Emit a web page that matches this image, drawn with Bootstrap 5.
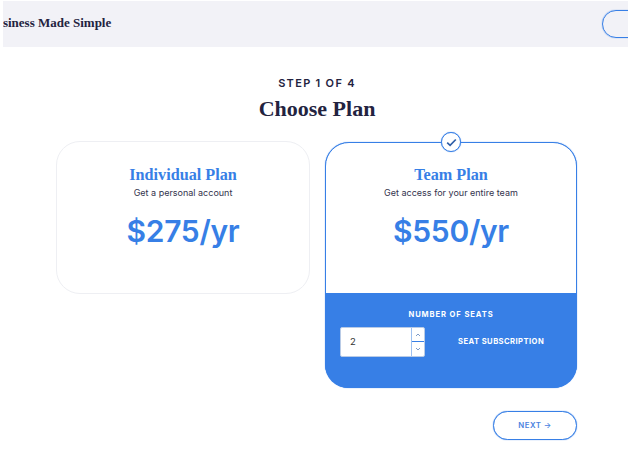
<!DOCTYPE html>
<html lang="en">
<head>
<meta charset="utf-8">
<title>Choose Plan</title>
<link rel="stylesheet" href="https://cdn.jsdelivr.net/npm/bootstrap@5.3.0/dist/css/bootstrap.min.css">
<style>
html,body{height:467px;overflow:hidden;}
body{font-family:"Inter","Liberation Sans",sans-serif;color:#23233f;background:#fff;}
.serif-face{font-family:"Liberation Serif",serif;font-weight:700;}
.top-strip{height:46px;margin:1px 0 0 3px;padding-bottom:1px;background:#f2f2f7;overflow:hidden;}
.brand-name{font-size:13px;line-height:1;color:#23233f;margin-left:-16px;padding-bottom:2px;white-space:nowrap;}
.ghost-pill{width:70px;height:28px;flex:none;margin-right:-44px;border:1px solid #377fe6;box-shadow:0 0 1px #377fe6;border-radius:14px;background:transparent;}
.step-label{font-size:11px;font-weight:600;letter-spacing:1.3px;line-height:14px;margin-top:29px;}
.heading-block{padding-left:6px;}
.page-title{font-size:22px;line-height:28px;margin:5px 0 0;}
.plans{width:522px;margin:18px 0 0 56px;gap:15px;align-items:flex-start;}
.plan-box{width:254px;flex:none;border-radius:24px;background:#fff;text-align:center;}
.plan-plain{height:153px;border:1px solid #eeeff3;}
.plan-active{width:252px;margin-top:1px;border:1px solid #377fe6;box-shadow:0 0 1px #377fe6;position:relative;overflow:visible;}
.plan-head{padding-top:23px;}
.plan-active .plan-head{height:150px;padding-top:22px;}
.plan-name{font-size:16.2px;line-height:20px;color:#377fe6;margin:0;}
.plan-sub{font-size:9px;line-height:12px;margin:2px 0 0;color:#33334d;}
.plan-price{font-size:30px;font-weight:600;line-height:40px;color:#377fe6;margin:12px 0 0;letter-spacing:-.3px;}
.check-mark{position:absolute;top:-11px;left:50%;width:20px;height:20px;margin-left:-10px;background:#fff;border:1px solid #377fe6;box-shadow:0 0 1px #377fe6;border-radius:50%;}
.seat-zone{height:95px;margin:0 -1px -1px;background:#377fe6;border-radius:0 0 23px 23px;color:#fff;padding:17px 15px 0;}
.seat-title{font-size:7.6px;font-weight:700;letter-spacing:.9px;line-height:10px;}
.seat-row{margin-top:7px;}
.seat-field{width:85px;height:30px;background:#fff;border:1px solid #b9cbe6;border-radius:2px;}
.seat-value{font-size:9.5px;color:#333;padding-left:9px;}
.seat-steps{width:13px;border-left:1px solid #9dc0f0;}
.seat-steps span{height:50%;font-size:0;}
.seat-steps span:first-child{border-bottom:1px solid #377fe6;}
.seat-note{font-size:7.6px;font-weight:700;letter-spacing:.45px;margin-left:33px;white-space:nowrap;}
.next-wrap{width:521px;margin:23px 0 0 56px;}
.next-pill{width:84px;height:29px;padding:0;border:1px solid #377fe6;box-shadow:0 0 1px #377fe6;border-radius:15px;background:#fff;color:#4b82e0;font-size:7.8px;font-weight:600;letter-spacing:.5px;}
</style>
</head>
<body>
<header class="top-strip d-flex align-items-center justify-content-between">
  <div class="brand-name serif-face">Business Made Simple</div>
  <button class="ghost-pill" type="button" aria-label="Menu"></button>
</header>
<main>
  <div class="heading-block text-center">
    <div class="step-label">STEP 1 OF 4</div>
    <h1 class="page-title serif-face">Choose Plan</h1>
  </div>
  <div class="plans d-flex">
    <section class="plan-box plan-plain">
      <div class="plan-head">
        <h2 class="plan-name serif-face">Individual Plan</h2>
        <p class="plan-sub">Get a personal account</p>
        <p class="plan-price">$275/yr</p>
      </div>
    </section>
    <section class="plan-box plan-active">
      <span class="check-mark d-flex align-items-center justify-content-center">
        <svg width="11" height="9" viewBox="0 0 11 9" aria-hidden="true"><path d="M1.2 4.6 4.1 7.4 9.8 1.5" fill="none" stroke="#2f5fa8" stroke-width="1.7"/></svg>
      </span>
      <div class="plan-head">
        <h2 class="plan-name serif-face">Team Plan</h2>
        <p class="plan-sub">Get access for your entire team</p>
        <p class="plan-price">$550/yr</p>
      </div>
      <div class="seat-zone">
        <div class="seat-title">NUMBER OF SEATS</div>
        <div class="seat-row d-flex align-items-center">
          <div class="seat-field d-flex justify-content-between align-items-stretch">
            <span class="seat-value d-flex align-items-center">2</span>
            <span class="seat-steps d-flex flex-column">
              <span class="d-flex align-items-center justify-content-center"><svg width="6" height="4" viewBox="0 0 6 4" aria-hidden="true"><path d="M1 3 3 1 5 3" fill="none" stroke="#7f9cc8"/></svg></span>
              <span class="d-flex align-items-center justify-content-center"><svg width="6" height="4" viewBox="0 0 6 4" aria-hidden="true"><path d="M1 1 3 3 5 1" fill="none" stroke="#7f9cc8"/></svg></span>
            </span>
          </div>
          <div class="seat-note">SEAT SUBSCRIPTION</div>
        </div>
      </div>
    </section>
  </div>
  <div class="next-wrap d-flex justify-content-end">
    <button class="next-pill" type="button">NEXT →</button>
  </div>
</main>
<script src="https://cdn.jsdelivr.net/npm/bootstrap@5.3.0/dist/js/bootstrap.bundle.min.js"></script>
</body>
</html>
